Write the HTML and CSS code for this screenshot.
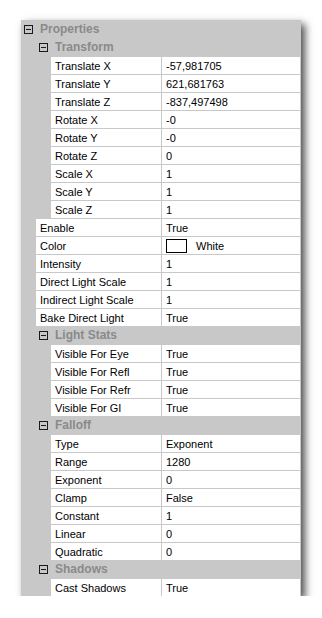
FILE: index.html
```html
<!DOCTYPE html>
<html lang="en">
<head>
    <meta charset="UTF-8">
    <meta name="viewport" content="width=device-width, initial-scale=1.0">
    <title>Properties</title>
    <link rel="stylesheet" href="styles.css">
</head>
<body>
    <div class="panel">
        <div class="group">
            <div class="head"><span class="toggle"></span>Properties</div>
            <div class="body">
                <div class="group">
                    <div class="head"><span class="toggle"></span>Transform</div>
                    <div class="body">
                        <div class="row"><div class="name">Translate X</div><div class="val">-57,981705</div></div>
                        <div class="row"><div class="name">Translate Y</div><div class="val">621,681763</div></div>
                        <div class="row"><div class="name">Translate Z</div><div class="val">-837,497498</div></div>
                        <div class="row"><div class="name">Rotate X</div><div class="val">-0</div></div>
                        <div class="row"><div class="name">Rotate Y</div><div class="val">-0</div></div>
                        <div class="row"><div class="name">Rotate Z</div><div class="val">0</div></div>
                        <div class="row"><div class="name">Scale X</div><div class="val">1</div></div>
                        <div class="row"><div class="name">Scale Y</div><div class="val">1</div></div>
                        <div class="row"><div class="name">Scale Z</div><div class="val">1</div></div>
                    </div>
                </div>
                <div class="row"><div class="name">Enable</div><div class="val">True</div></div>
                <div class="row"><div class="name">Color</div><div class="val"><span class="swatch"></span>White</div></div>
                <div class="row"><div class="name">Intensity</div><div class="val">1</div></div>
                <div class="row"><div class="name">Direct Light Scale</div><div class="val">1</div></div>
                <div class="row"><div class="name">Indirect Light Scale</div><div class="val">1</div></div>
                <div class="row"><div class="name">Bake Direct Light</div><div class="val">True</div></div>
                <div class="group">
                    <div class="head"><span class="toggle"></span>Light Stats</div>
                    <div class="body">
                        <div class="row"><div class="name">Visible For Eye</div><div class="val">True</div></div>
                        <div class="row"><div class="name">Visible For Refl</div><div class="val">True</div></div>
                        <div class="row"><div class="name">Visible For Refr</div><div class="val">True</div></div>
                        <div class="row"><div class="name">Visible For GI</div><div class="val">True</div></div>
                    </div>
                </div>
                <div class="group">
                    <div class="head"><span class="toggle"></span>Falloff</div>
                    <div class="body">
                        <div class="row"><div class="name">Type</div><div class="val">Exponent</div></div>
                        <div class="row"><div class="name">Range</div><div class="val">1280</div></div>
                        <div class="row"><div class="name">Exponent</div><div class="val">0</div></div>
                        <div class="row"><div class="name">Clamp</div><div class="val">False</div></div>
                        <div class="row"><div class="name">Constant</div><div class="val">1</div></div>
                        <div class="row"><div class="name">Linear</div><div class="val">0</div></div>
                        <div class="row"><div class="name">Quadratic</div><div class="val">0</div></div>
                    </div>
                </div>
                <div class="group">
                    <div class="head"><span class="toggle"></span>Shadows</div>
                    <div class="body">
                        <div class="row"><div class="name">Cast Shadows</div><div class="val">True</div></div>
                    </div>
                </div>
            </div>
        </div>
    </div>
</body>
</html>
```

FILE: styles.css
```css
* {
    margin: 0;
    padding: 0;
    box-sizing: border-box;
}

body {
    font-family: 'Liberation Sans', Arial, sans-serif;
    font-size: 11px;
    color: #000;
    background-color: #fff;
}

.panel {
    width: 280px;
    margin: 20px 0 0 21px;
    padding-right: 1px;
    background-color: #c8c8c8;
    box-shadow: 4px 4px 8px rgba(0, 0, 0, 0.7);
}

.head {
    display: flex;
    align-items: center;
    height: 18px;
    padding-left: 3px;
    font-size: 12px;
    font-weight: bold;
    color: #8a8a8a;
}

.toggle {
    position: relative;
    width: 9px;
    height: 9px;
    margin: 1px 7px 0 0;
    border: 1px solid #1a1a1a;
}

.toggle::after {
    content: '';
    position: absolute;
    left: 1px;
    top: 3px;
    width: 5px;
    height: 1px;
    background-color: #1a1a1a;
}

.body {
    padding-left: 15px;
}

.row {
    display: grid;
    grid-template-columns: 1fr 139px;
    height: 18px;
    border-top: 1px solid #c8c8c8;
}

.name,
.val {
    display: flex;
    align-items: center;
    padding-left: 4px;
    background-color: #fff;
    white-space: nowrap;
    overflow: hidden;
}

.val {
    border-left: 1px solid #c8c8c8;
}

.swatch {
    width: 21px;
    height: 14px;
    margin-right: 9px;
    border: 1px solid #000;
    background-color: #fff;
}
```
